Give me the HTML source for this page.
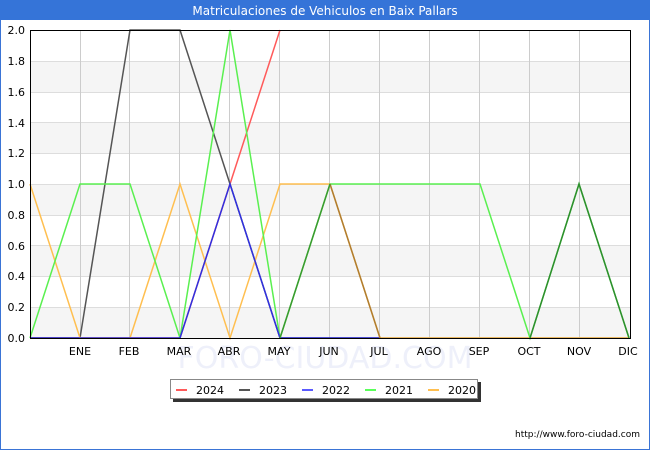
<!DOCTYPE html>
<html><head><style>
body{margin:0;width:650px;height:450px;overflow:hidden;background:#fff;font-family:"Liberation Sans","DejaVu Sans",sans-serif}
</style></head><body>
<svg width="650" height="450" xmlns="http://www.w3.org/2000/svg" font-family="DejaVu Sans, Liberation Sans, sans-serif">
<rect x="0.5" y="0.5" width="649" height="449" fill="#fff" stroke="#3a74d6"/>
<rect x="0" y="0" width="650" height="20" fill="#3574d8"/>
<text x="325" y="15" fill="#fff" font-size="12" text-anchor="middle">Matriculaciones de Vehiculos en Baix Pallars</text>
<g fill="#f5f5f5">
<rect x="30" y="61" width="601" height="31"/><rect x="30" y="123" width="601" height="30"/>
<rect x="30" y="184" width="601" height="31"/><rect x="30" y="246" width="601" height="30"/>
<rect x="30" y="307" width="601" height="31"/></g>
<g stroke="#ddd" stroke-width="1">
<path d="M30 61.5H631M30 92.5H631M30 122.5H631M30 153.5H631M30 184.5H631M30 215.5H631M30 245.5H631M30 276.5H631M30 307.5H631"/></g>
<g stroke="#ccc"><path d="M80.5 30V338M129.5 30V338M179.5 30V338M229.5 30V338M279.5 30V338M329.5 30V338M379.5 30V338M429.5 30V338M479.5 30V338M529.5 30V338M579.5 30V338"/></g>
<text x="325" y="368" font-size="30" fill="#eef0fa" text-anchor="middle">FORO-CIUDAD.COM</text>
<g fill="none" stroke-width="1.5" stroke-linejoin="miter">
<polyline stroke="#ff5a5a" points="30,338 80,338 130,338 180,338 230,184 280,30"/>
<polyline stroke="#555" points="30,338 80,338 130,30 180,30 230,184 280,338 629,338"/>
<polyline stroke="#ffbf50" points="30,184 80,338 130,338 180,184 230,338 280,184 330,184 380,338 629,338"/>
<polyline stroke="#5af050" points="30,338 80,184 130,184 180,338 230,30 280,338 330,184 380,184 430,184 480,184 530,338 579,184 629,338"/>
<polyline stroke="#3030e0" points="30,338 180,338 230,184 280,338 380,338"/>
<polyline stroke="#b07d30" points="330,184 380,338"/>
<polyline stroke="#3a9a30" points="280,338 330,184 M530,338" />
<polyline stroke="#2e8e2e" points="530,338 579,184 629,338"/>
</g>
<rect x="30.5" y="30.5" width="600" height="308" fill="none" stroke="#000"/>
<g font-size="11" fill="#000" text-anchor="end">
<text x="25" y="34">2.0</text><text x="25" y="65">1.8</text><text x="25" y="96">1.6</text><text x="25" y="127">1.4</text><text x="25" y="157">1.2</text><text x="25" y="188">1.0</text><text x="25" y="219">0.8</text><text x="25" y="250">0.6</text><text x="25" y="280">0.4</text><text x="25" y="311">0.2</text><text x="25" y="342">0.0</text></g>
<g font-size="11" fill="#000" text-anchor="middle">
<text x="80" y="355">ENE</text><text x="129" y="355">FEB</text><text x="179" y="355">MAR</text><text x="229" y="355">ABR</text><text x="279" y="355">MAY</text><text x="329" y="355">JUN</text><text x="379" y="355">JUL</text><text x="429" y="355">AGO</text><text x="479" y="355">SEP</text><text x="529" y="355">OCT</text><text x="579" y="355">NOV</text><text x="628" y="355">DIC</text></g>
<rect x="173" y="382" width="308" height="20" fill="#333"/>
<rect x="170.5" y="379.5" width="307" height="19" fill="#fff" stroke="#888"/>
<g stroke-width="2"><path d="M176 390H187" stroke="#ff5a5a"/><path d="M239 390H250" stroke="#555"/><path d="M302 390H313" stroke="#5a5aff"/><path d="M365 390H376" stroke="#5aff5a"/><path d="M428 390H439" stroke="#ffbf50"/></g>
<g font-size="11" fill="#000"><text x="196" y="394">2024</text><text x="259" y="394">2023</text><text x="322" y="394">2022</text><text x="385" y="394">2021</text><text x="448" y="394">2020</text></g>
<text x="640" y="437" font-size="9" fill="#000" text-anchor="end">http://www.foro-ciudad.com</text>
</svg>
</body></html>
